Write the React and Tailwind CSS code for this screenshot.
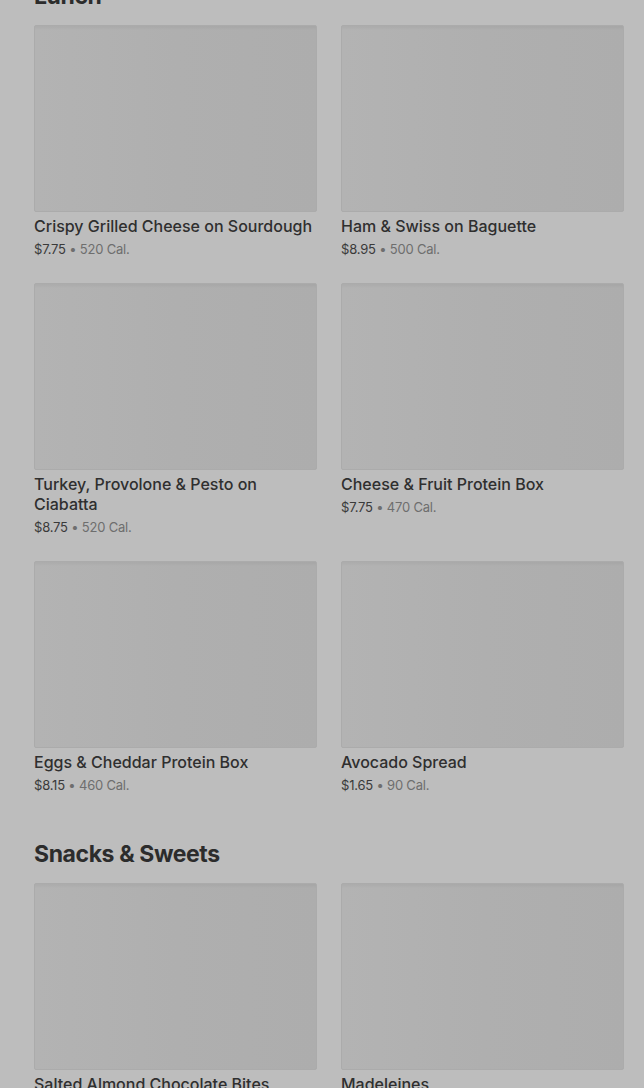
import React from 'react';

const SECTIONS = [
  {
    title: 'Lunch',
    items: [
      { name: 'Crispy Grilled Cheese on Sourdough', price: '$7.75', cal: '520 Cal.' },
      { name: 'Ham & Swiss on Baguette', price: '$8.95', cal: '500 Cal.' },
      { name: 'Turkey, Provolone & Pesto on Ciabatta', price: '$8.75', cal: '520 Cal.' },
      { name: 'Cheese & Fruit Protein Box', price: '$7.75', cal: '470 Cal.' },
      { name: 'Eggs & Cheddar Protein Box', price: '$8.15', cal: '460 Cal.' },
      { name: 'Avocado Spread', price: '$1.65', cal: '90 Cal.' },
    ],
  },
  {
    title: 'Snacks & Sweets',
    items: [
      { name: 'Salted Almond Chocolate Bites', price: '$3.45', cal: '200 Cal.' },
      { name: 'Madeleines', price: '$2.95', cal: '180 Cal.' },
    ],
  },
];

function ItemCard({ item }) {
  return (
    <div className="flex flex-col">
      <div className="h-[187px] rounded-[2px] border border-[#ababab] bg-gradient-to-r from-[#b3b3b3] via-[#afafaf] to-[#adadad] shadow-[inset_0_4px_3px_-2px_rgba(0,0,0,0.04)]" />
      <div className="mt-1 text-base leading-5 font-medium text-[#2f2f2f]">{item.name}</div>
      <div className="mt-1 text-[13px] leading-[18px] tracking-[-0.2px]">
        <span className="text-[#3a3a3a]">{item.price}</span>
        <span className="text-[#6e6e6e]"> • {item.cal}</span>
      </div>
    </div>
  );
}

export default function App() {
  return (
    <div
      className="h-[1088px] overflow-hidden bg-[#bdbdbd]"
      style={{ fontFamily: 'Inter, Roboto, "Liberation Sans", sans-serif' }}
    >
      <div className="-mt-[18px] pl-[34px] pr-[20px]">
        {SECTIONS.map(section => (
          <div key={section.title} className="mb-[46px]">
            <h2 className="text-[23px] leading-7 font-bold text-[#2c2c2c] tracking-[-0.4px] mb-[15px]">
              {section.title}
            </h2>
            <div className="grid grid-cols-2 gap-x-6 gap-y-[25px]">
              {section.items.map(item => (
                <ItemCard key={item.name} item={item} />
              ))}
            </div>
          </div>
        ))}
      </div>
    </div>
  );
}
